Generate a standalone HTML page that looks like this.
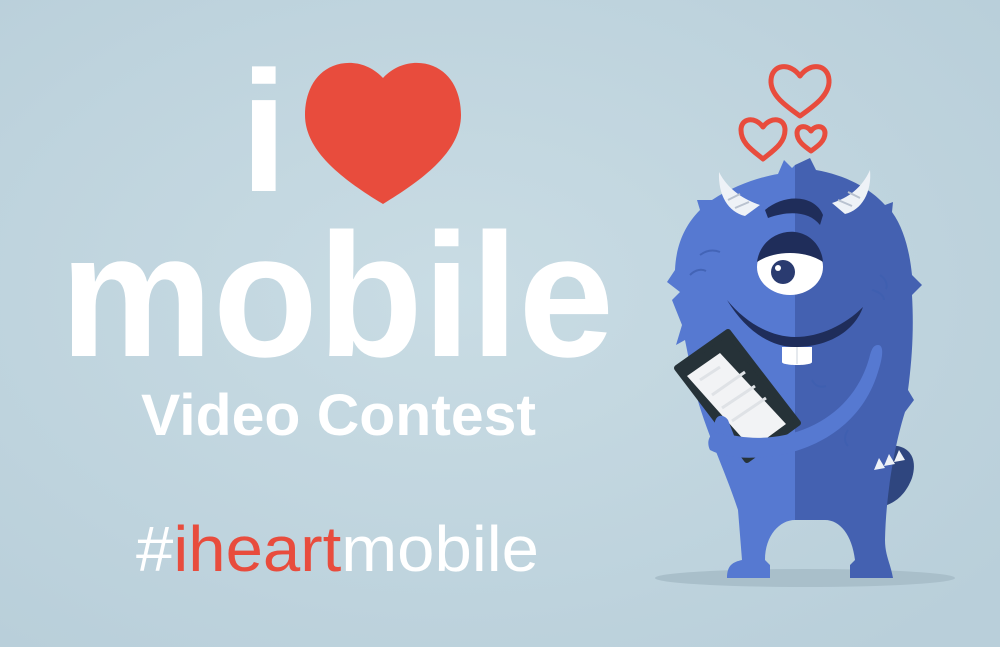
<!DOCTYPE html>
<html><head><meta charset="utf-8"><style>
html,body{margin:0;padding:0;}
body{width:1000px;height:647px;overflow:hidden;background:#c3d7e0;}
svg{display:block;}
</style></head><body>
<svg width="1000" height="647" viewBox="0 0 1000 647" xmlns="http://www.w3.org/2000/svg">
<defs>
<radialGradient id="bg" cx="0.45" cy="0.45" r="0.7">
<stop offset="0" stop-color="#c9dce4"/><stop offset="1" stop-color="#b9cfda"/>
</radialGradient>
</defs>
<rect width="1000" height="647" fill="url(#bg)"/>

<text x="240" y="191" font-family="Liberation Sans, sans-serif" font-weight="bold" font-size="172" fill="#fff">i</text>
<path d="M383 78 C 368 62 348 60 333 66 C 313 74 305 95 305 115 C 305 150 340 178 383 204 C 426 178 461 150 461 115 C 461 95 453 74 433 66 C 418 60 398 62 383 78 Z" fill="#e84c3d"/>
<text x="60" y="356" textLength="554" lengthAdjust="spacingAndGlyphs" font-family="Liberation Sans, sans-serif" font-weight="bold" font-size="176" fill="#fff">mobile</text>
<text x="141" y="435" textLength="395" lengthAdjust="spacingAndGlyphs" font-family="Liberation Sans, sans-serif" font-weight="bold" font-size="58" fill="#fff">Video Contest</text>
<text x="136" y="571" textLength="403" lengthAdjust="spacingAndGlyphs" font-family="Liberation Sans, sans-serif" font-size="64" fill="#fff">#<tspan fill="#e84c3d">iheart</tspan>mobile</text>

<g fill="none" stroke="#e84c3d" stroke-width="5" stroke-linejoin="round">
<path d="M800 76 C 790 62 772 64 771 80 C 770 95 786 106 800 116 C 814 106 830 95 829 80 C 828 64 810 62 800 76 Z"/>
<path d="M763 127 C 755 116 741 118 741 130 C 741 143 752 150 763 159 C 774 150 785 143 785 130 C 785 118 771 116 763 127 Z"/>
<path d="M811 131 C 806 124 797 126 797 133 C 797 141 804 146 811 151 C 818 146 825 141 825 133 C 825 126 816 124 811 131 Z"/>
</g>

<ellipse cx="805" cy="578" rx="150" ry="9" fill="#a9bfca"/>

<!-- tail -->
<path d="M878 448 C 902 440 920 452 912 478 C 903 502 885 508 870 508 Z" fill="#2f467f"/>

<!-- body left -->
<path d="M795 165 L 795 520 C 780 520 765 535 765 560 L 770 565 L 770 578 L 727 578 C 727 565 733 562 742 560 L 738 510 C 725 470 705 430 695 390 L 685 340 L 676 345 L 682 325 L 672 300 L 680 292 L 667 282 L 675 270 C 676 245 685 225 700 210 L 697 200 L 712 200 C 735 185 760 177 778 174 L 784 160 L 792 168 Z" fill="#5679d1"/>
<!-- body right -->
<path d="M795 165 L 810 158 L 816 170 C 845 175 870 188 885 205 L 893 202 L 892 212 C 905 230 910 255 912 275 L 922 285 L 912 295 C 914 330 912 360 908 390 L 914 400 L 905 412 C 896 440 886 490 885 540 C 885 555 890 562 893 578 L 850 578 L 850 565 L 855 560 C 852 535 840 520 825 520 L 795 520 Z" fill="#4461b1"/>

<g fill="#eef2f7"><path d="M874 470 l5 -12 l6 10 z"/><path d="M884 466 l5 -12 l6 10 z"/><path d="M894 462 l5 -12 l6 10 z"/></g>

<path d="M719 172 C 718 195 728 212 745 216 L 760 205 C 745 200 728 190 719 172 Z" fill="#eef2f7"/>
<path d="M870 170 C 872 192 862 210 845 214 L 832 203 C 848 198 862 188 870 170 Z" fill="#eef2f7"/>
<g stroke="#b9c2cf" stroke-width="2" fill="none"><path d="M728 200 l12 -6"/><path d="M735 208 l14 -6"/><path d="M860 198 l-12 -6"/><path d="M852 206 l-14 -6"/></g>

<g stroke="#3f5fb0" stroke-width="2" fill="none" opacity="0.8">
<path d="M700 255 c 8 -6 15 -5 20 -3"/><path d="M690 275 c 6 -6 12 -6 16 -4"/>
<path d="M880 275 c 6 4 8 10 6 14"/><path d="M872 290 c 8 2 12 6 12 10"/>
<path d="M812 380 c 3 6 8 8 14 6"/><path d="M848 430 c -4 6 -4 12 0 16"/>
</g>

<path d="M765 210 C 785 193 815 195 823 215 L 820 225 C 810 212 790 210 768 218 Z" fill="#1f2d5a"/>
<ellipse cx="790" cy="267" rx="33" ry="28" fill="#fff"/>
<path d="M757 262 C 760 240 780 230 795 232 C 812 234 822 248 823 262 C 805 250 775 250 757 262 Z" fill="#1f2d5a"/>
<circle cx="783" cy="272" r="12" fill="#2a3b70"/>
<circle cx="778" cy="268" r="3" fill="#fff"/>

<path d="M727 300 C 745 330 770 347 795 347 C 830 347 855 330 863 307 C 845 325 820 337 795 337 C 770 337 745 322 727 300 Z" fill="#1f2d5a"/>
<path d="M782 347 L 812 347 L 812 362 C 812 366 782 366 782 362 Z" fill="#fff"/>
<line x1="797" y1="347" x2="797" y2="364" stroke="#cbd3de" stroke-width="1"/>

<path d="M677 368 L 728 332 L 798 423 L 747 460 Z" fill="#263238" stroke="#263238" stroke-width="6" stroke-linejoin="round"/>
<path d="M687 376 L 720 353 L 786 424 L 752 449 Z" fill="#f2f3f5"/>
<g stroke="#dfe2e6" stroke-width="3"><line x1="700" y1="380" x2="720" y2="367"/><line x1="712" y1="395" x2="745" y2="372"/><line x1="722" y1="408" x2="755" y2="386"/><line x1="732" y1="421" x2="766" y2="398"/></g>

<path d="M878 345 C 885 345 882 360 878 372 C 865 415 830 445 780 455 C 750 460 725 458 710 450 C 705 440 712 430 720 432 C 740 438 760 440 785 435 C 830 425 860 395 870 355 C 872 348 874 345 878 345 Z" fill="#5679d1"/>
<path d="M715 432 C 712 415 722 412 728 420 L 735 438 Z" fill="#5679d1"/>
</svg>
</body></html>
